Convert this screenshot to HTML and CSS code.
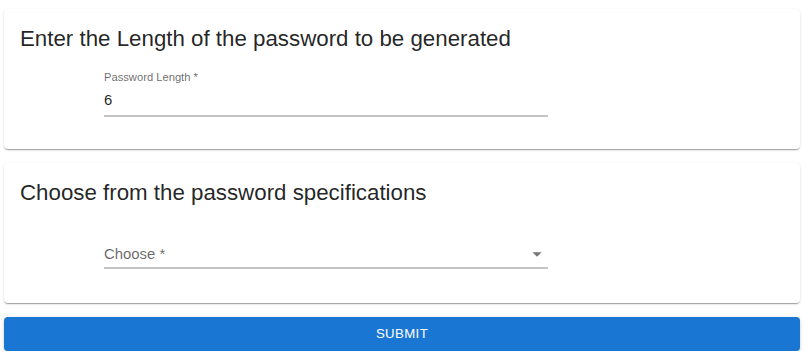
FILE: index.html
```html
<!DOCTYPE html>
<html lang="en">
<head>
    <meta charset="UTF-8">
    <meta name="viewport" content="width=device-width, initial-scale=1.0">
    <title>Password Generator</title>
    <link rel="stylesheet" href="styles.css">
</head>
<body>

    <div class="container">
        <div class="card">
            <h5 class="card-title">Enter the Length of the password to be generated</h5>
            <div class="field field-text">
                <label for="length" class="field-label">Password Length *</label>
                <input type="number" id="length" name="length" class="field-input" value="6" required>
            </div>
        </div>

        <div class="card">
            <h5 class="card-title">Choose from the password specifications</h5>
            <div class="field field-select">
                <span class="select-placeholder">Choose *</span>
                <svg class="select-arrow" viewBox="0 0 24 24" width="22" height="22"><path d="M7 10l5 5 5-5z"></path></svg>
            </div>
        </div>

        <button type="submit" class="btn">Submit</button>
    </div>

</body>
</html>
```

FILE: styles.css
```css
body {
    font-family: "Liberation Sans", Arial, sans-serif;
    background-color: #ffffff;
    margin: 0;
    padding: 0;
}

.container {
    padding: 9px 6px 0 4px;
    display: flex;
    flex-direction: column;
    gap: 14px;
}

.card {
    background-color: #ffffff;
    border-radius: 4px;
    box-shadow: 0 2px 1px -1px rgba(0, 0, 0, 0.2), 0 1px 1px 0 rgba(0, 0, 0, 0.14), 0 1px 3px 0 rgba(0, 0, 0, 0.12);
    padding: 16px;
    height: 140px;
    box-sizing: border-box;
}

.card-title {
    margin: 0;
    font-size: 22.3px;
    font-weight: 400;
    line-height: 28px;
    color: rgba(0, 0, 0, 0.87);
}

.field {
    width: 444px;
    margin-left: 84px;
    border-bottom: 2px solid #c4c4c4;
    box-sizing: border-box;
}

.field-text {
    margin-top: 17px;
    display: flex;
    flex-direction: column;
}

.field-label {
    font-size: 11.2px;
    line-height: 15px;
    color: rgba(0, 0, 0, 0.6);
}

.field-input {
    border: none;
    outline: none;
    padding: 4px 0 4px;
    font-family: inherit;
    font-size: 14.9px;
    line-height: 22px;
    color: rgba(0, 0, 0, 0.87);
    background: transparent;
}

.field-select {
    margin-top: 34px;
    height: 28px;
    display: flex;
    align-items: center;
    justify-content: space-between;
}

.select-placeholder {
    font-size: 14.9px;
    color: rgba(0, 0, 0, 0.6);
}

.select-arrow {
    fill: rgba(0, 0, 0, 0.54);
}

.btn {
    width: 100%;
    height: 34px;
    padding-bottom: 2px;
    background-color: #1976d2;
    border: none;
    color: white;
    font-family: inherit;
    font-size: 13.2px;
    font-weight: 500;
    letter-spacing: 0.4px;
    text-transform: uppercase;
    border-radius: 4px;
    box-shadow: 0 3px 1px -2px rgba(0, 0, 0, 0.2), 0 2px 2px 0 rgba(0, 0, 0, 0.14), 0 1px 5px 0 rgba(0, 0, 0, 0.12);
    cursor: pointer;
}

.btn:hover {
    background-color: #1565c0;
}
```
